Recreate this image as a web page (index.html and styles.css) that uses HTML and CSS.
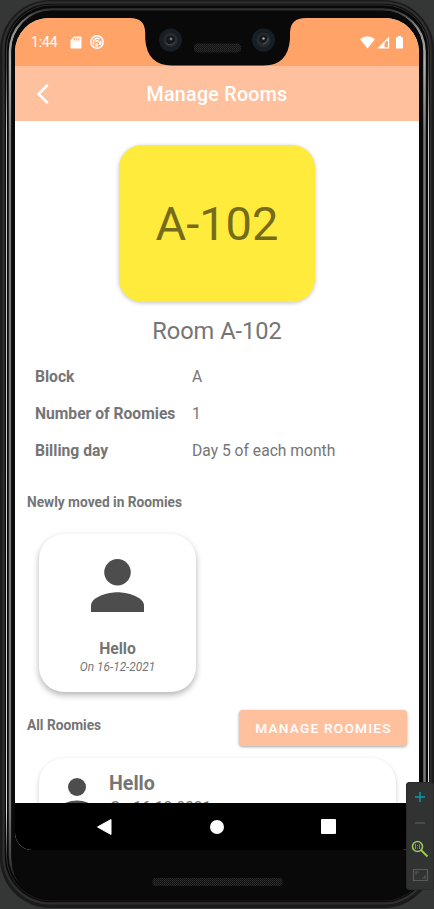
FILE: index.html
```html
<!DOCTYPE html>
<html lang="en">
<head>
<meta charset="utf-8">
<title>Manage Rooms</title>
<link rel="stylesheet" href="styles.css">
</head>
<body>
<div class="device">
  <svg class="frame" width="434" height="909" viewBox="0 0 434 909" fill="none">
    <defs>
      <linearGradient id="metal" x1="0" y1="0" x2="0" y2="1">
        <stop offset="0" stop-color="#333"/><stop offset=".02" stop-color="#888"/><stop offset=".06" stop-color="#b0b0b0"/><stop offset=".14" stop-color="#777"/>
        <stop offset=".9" stop-color="#777"/><stop offset=".955" stop-color="#444"/><stop offset="1" stop-color="#090909"/>
      </linearGradient>
      <linearGradient id="rim" x1="0" y1="0" x2="0" y2="1">
        <stop offset="0" stop-color="#2b2b2b"/><stop offset=".07" stop-color="#444"/><stop offset=".14" stop-color="#ccc"/>
        <stop offset=".9" stop-color="#ddd"/><stop offset=".95" stop-color="#333"/><stop offset="1" stop-color="#1a1a1a"/>
      </linearGradient>
      <pattern id="mesh" width="2" height="2" patternUnits="userSpaceOnUse">
        <rect width="2" height="2" fill="#101010"/><rect width="1" height="1" fill="#303030"/><rect x="1" y="1" width="1" height="1" fill="#272727"/>
      </pattern>
    </defs>
    <rect width="434" height="909" fill="#353736"/>
    <rect x="0" y="0" width="434" height="908" rx="50" fill="#1b1b1b"/>
    <rect x="3.5" y="2.5" width="427" height="901" rx="47" stroke="#303030" stroke-width="2"/>
    <rect x="5" y="4" width="424.500" height="898" rx="46" fill="#080808"/>
    <rect x="6.500" y="5" width="422" height="896" rx="45" stroke="url(#rim)"/>
    <rect x="10" y="9.500" width="414.500" height="888" rx="42" stroke="url(#metal)" stroke-width="2.500"/>
    <rect x="11.500" y="10.500" width="411.500" height="889.500" rx="40" fill="#090909"/>
    <rect x="152.500" y="878" width="130" height="8" rx="3" fill="url(#mesh)"/>
  </svg>

  <div class="screen">
    <div class="status">
      <span class="time">1:44</span>
      <svg class="sd" width="12" height="13" viewBox="0 0 12 13"><path d="M4 .5h6.500q1 0 1 1v10q0 1-1 1h-9q-1 0-1-1V4.500z" fill="#fff"/><path d="M4.500 2v2.500M6.700 2v2.500M8.900 2v2.500" stroke="#ffa368" stroke-width="1.100"/></svg>
      <svg class="round" width="14" height="14" viewBox="0 0 14 14" fill="none" stroke="#fff"><circle cx="7" cy="7" r="6.200" stroke-width="1.500"/><path d="M4 9.300A3.800 3.800 0 0 1 9.500 4.200M10.500 5.500A3.800 3.800 0 0 1 9.800 9.800M4.800 10.200A3.800 3.800 0 0 0 8 10.700" stroke-width="1.400"/><path d="M5.500 6.500q1.500-1.500 3 0L10.500 9.500M5.500 8l2.700 2.300" stroke-width="1.300"/></svg>
      <span class="spring"></span>
      <svg class="wifi" width="15" height="13" viewBox="0 0 15 13"><path d="M0 3.200Q7.500-2.500 15 3.200L7.500 12.500z" fill="#fff"/></svg>
      <svg class="signal" width="13" height="13" viewBox="0 0 13 13"><path fill-rule="evenodd" d="M12.200.5v12H.2zM11 6v5.300H7.500V6.900L9.500 5H11z" fill="#fff"/></svg>
      <svg class="battery" width="7" height="13" viewBox="0 0 7 13"><path d="M2 0h3v1.200h1.500q.5 0 .5.600v10.200q0 .6-.6.600H.6Q0 12.600 0 12V1.800q0-.6.600-.6H2z" fill="#fff"/></svg>
      <svg class="notch" width="176" height="48" viewBox="0 0 176 48">
        <path d="M0 0Q15.200 0 15.200 15V21Q17 47.500 42 47.500H134Q158 47.500 160 21V15Q160 0 176 0z" fill="#090909"/>
        <circle cx="40.500" cy="22" r="11.500" fill="#171e25"/><circle cx="40.500" cy="22" r="7" fill="#2a2c2e"/><circle cx="40.500" cy="22" r="4.500" fill="#14171b"/><circle cx="41" cy="21" r="1.400" fill="#717985"/><path d="M36 25q4 4 9-1" stroke="#4b4d4e" fill="none"/>
        <circle cx="133.500" cy="22" r="11.500" fill="#171e25"/><circle cx="133.500" cy="22" r="7" fill="#282b2d"/><circle cx="133.500" cy="21" r="4.300" fill="#15191d"/><circle cx="133.500" cy="20.500" r="1.200" fill="#a6adb5"/><path d="M133 26q5-1 5-6" stroke="#444749" stroke-width="1.500" fill="none"/>
        <rect x="64" y="25.500" width="47" height="9" rx="4" fill="url(#mesh)"/>
      </svg>
    </div>
    <header class="appbar">
      <svg width="13" height="20" viewBox="0 0 13 20" fill="none" stroke="#fff" stroke-width="2.500"><path d="M11.700 1 2.500 10l9.200 9"/></svg>
      <h1>Manage Rooms</h1>
    </header>
    <main class="content">
      <div class="room"><span>A-102</span></div>
      <h2>Room A-102</h2>
      <dl class="facts">
        <dt>Block</dt><dd>A</dd>
        <dt>Number of Roomies</dt><dd>1</dd>
        <dt>Billing day</dt><dd>Day 5 of each month</dd>
      </dl>
      <h3 class="newly">Newly moved in Roomies</h3>
      <article class="card">
        <svg width="53" height="53" viewBox="0 0 16 16" fill="#4d4d4d"><circle cx="8" cy="4" r="4"/><path d="M8 10c-2.670 0-8 1.340-8 4v2h16v-2c0-2.660-5.330-4-8-4z"/></svg>
        <strong>Hello</strong>
        <em>On 16-12-2021</em>
      </article>
      <div class="allrow"><h3>All Roomies</h3><button>MANAGE ROOMIES</button></div>
      <article class="listcard">
        <svg width="36" height="36" viewBox="0 0 16 16" fill="#4d4d4d"><circle cx="8" cy="4" r="4"/><path d="M8 10c-2.670 0-8 1.340-8 4v2h16v-2c0-2.660-5.330-4-8-4z"/></svg>
        <div><strong>Hello</strong><em>On 16-12-2021</em></div>
      </article>
    </main>
    <nav class="nav">
      <svg width="15" height="16" viewBox="0 0 15 16"><path d="M.5 8 14 .5v15z" fill="#fff" stroke="#fff" stroke-linejoin="round"/></svg>
      <svg width="14" height="14" viewBox="0 0 14 14"><circle cx="7" cy="7" r="7" fill="#fff"/></svg>
      <svg width="15" height="15" viewBox="0 0 15 15"><rect width="15" height="15" rx="1" fill="#fff"/></svg>
    </nav>
  </div>

  <div class="tools">
    <svg width="28" height="108" viewBox="0 0 28 108" fill="none">
      <path d="M9 15h10M14 10v10" stroke="#0a9bb0" stroke-width="1.400"/>
      <path d="M9 41h10" stroke="#555" stroke-width="1.400"/>
      <circle cx="11.500" cy="64.500" r="5" stroke="#9bc954" stroke-width="1.600"/><path d="m15 68 6.500 6.500" stroke="#9bc954" stroke-width="2"/><path d="M9.500 62v5M13.500 62v5M11.500 63v1M11.500 65.500v1" stroke="#78984d"/>
      <path d="M7.500 87.500h14v11h-14zM10 92.500v-2.500h3M16 96h3v-2.500" stroke="#5b5b5b" stroke-width="1.200"/>
    </svg>
  </div>
</div>
</body>
</html>
```
FILE: styles.css
```css
* { box-sizing: border-box; }
body { margin: 0; font-family: Roboto, sans-serif; color: #757575; background: #353736; }
h1, h2, h3, dl, dd { margin: 0; }
svg { display: block; flex: none; }
.device { position: relative; width: 434px; height: 909px; padding: 18px 15px 0; overflow: hidden; }
.frame { position: absolute; left: 0; top: 0; }
.screen { position: relative; display: flex; flex-direction: column; height: 832px; background: #fff; border-radius: 34px 34px 17px 17px; overflow: hidden; }

.status { position: relative; flex: none; display: flex; align-items: center; height: 48px; padding: 0 16px; background: #ffa368; color: #fff; }
.time { width: 39px; font-size: 14px; letter-spacing: -.1px; }
.round { margin-left: 8px; }
.spring { flex: 1; }
.signal { margin-left: 2px; }
.battery { margin-left: 6px; }
.notch { position: absolute; left: 115px; top: 0; }

.appbar { flex: none; display: grid; grid-template-columns: 22px 1fr 22px; align-items: center; height: 55px; padding: 0 21px; background: #ffc19d; color: #fff; }
h1 { padding-top: 2px; font-size: 19.700px; font-weight: 500; text-align: center; letter-spacing: .25px; }

.content { flex: 1; min-height: 0; overflow: hidden; padding: 24px 12px 0; }
.room { display: flex; align-items: center; justify-content: center; width: 196px; height: 157px; margin: 0 auto; padding-bottom: 1px; background: #ffeb3b; border-radius: 23px; box-shadow: 0 1px 4px rgba(0,0,0,.24); color: #756c1b; font-size: 47px; }
h2 { height: 58px; line-height: 58px; font-size: 23.600px; font-weight: 400; text-align: center; }
.facts { display: grid; grid-template-columns: 157px 1fr; grid-auto-rows: 37px; align-items: center; margin: -2px 0 2px; padding-left: 8px; font-size: 15.650px; }
dt { font-weight: 700; }
h3 { font-size: 13.720px; font-weight: 700; }
.newly { height: 63px; line-height: 63px; }
.card { display: flex; flex-direction: column; align-items: center; width: 157px; height: 158px; margin: 0 0 0 12px; padding-top: 25px; border-radius: 25px; background: #fff; box-shadow: 0 3px 6px rgba(0,0,0,.3); }
.card svg { margin-left: -1px; }
.card strong { margin-top: 27px; font-size: 15.700px; line-height: 19px; }
.card em { font-size: 11.900px; line-height: 18px; }
.allrow { display: flex; align-items: center; justify-content: space-between; height: 36px; margin-top: 18px; }
button { width: 168px; height: 36px; padding: 0 0 0 1px; border: 0; border-radius: 4px; background: #ffc19d; color: #fff; font: 500 13.700px Roboto, sans-serif; letter-spacing: 1.200px; box-shadow: 0 1px 3px rgba(0,0,0,.35); }
.allrow h3 { padding-bottom: 6px; }
.listcard { display: flex; width: 357px; height: 100px; margin: 12px 0 0 12px; padding: 20px 20px 0; border-radius: 25px; background: #fff; box-shadow: 0 2px 5px rgba(0,0,0,.2); }
.listcard div { display: flex; flex-direction: column; margin: -7px 0 0 14px; }
.listcard strong { font-size: 19.600px; line-height: 25px; }
.listcard em { font-size: 16px; line-height: 23px; }

.nav { flex: none; display: flex; align-items: center; justify-content: space-between; height: 47px; padding: 0 83px 0 82px; background: #000; }
.tools { position: absolute; left: 406px; top: 782px; width: 28px; height: 108px; border-radius: 4px; background: #313333; box-shadow: inset 0 0 0 1px #292929; }
```
